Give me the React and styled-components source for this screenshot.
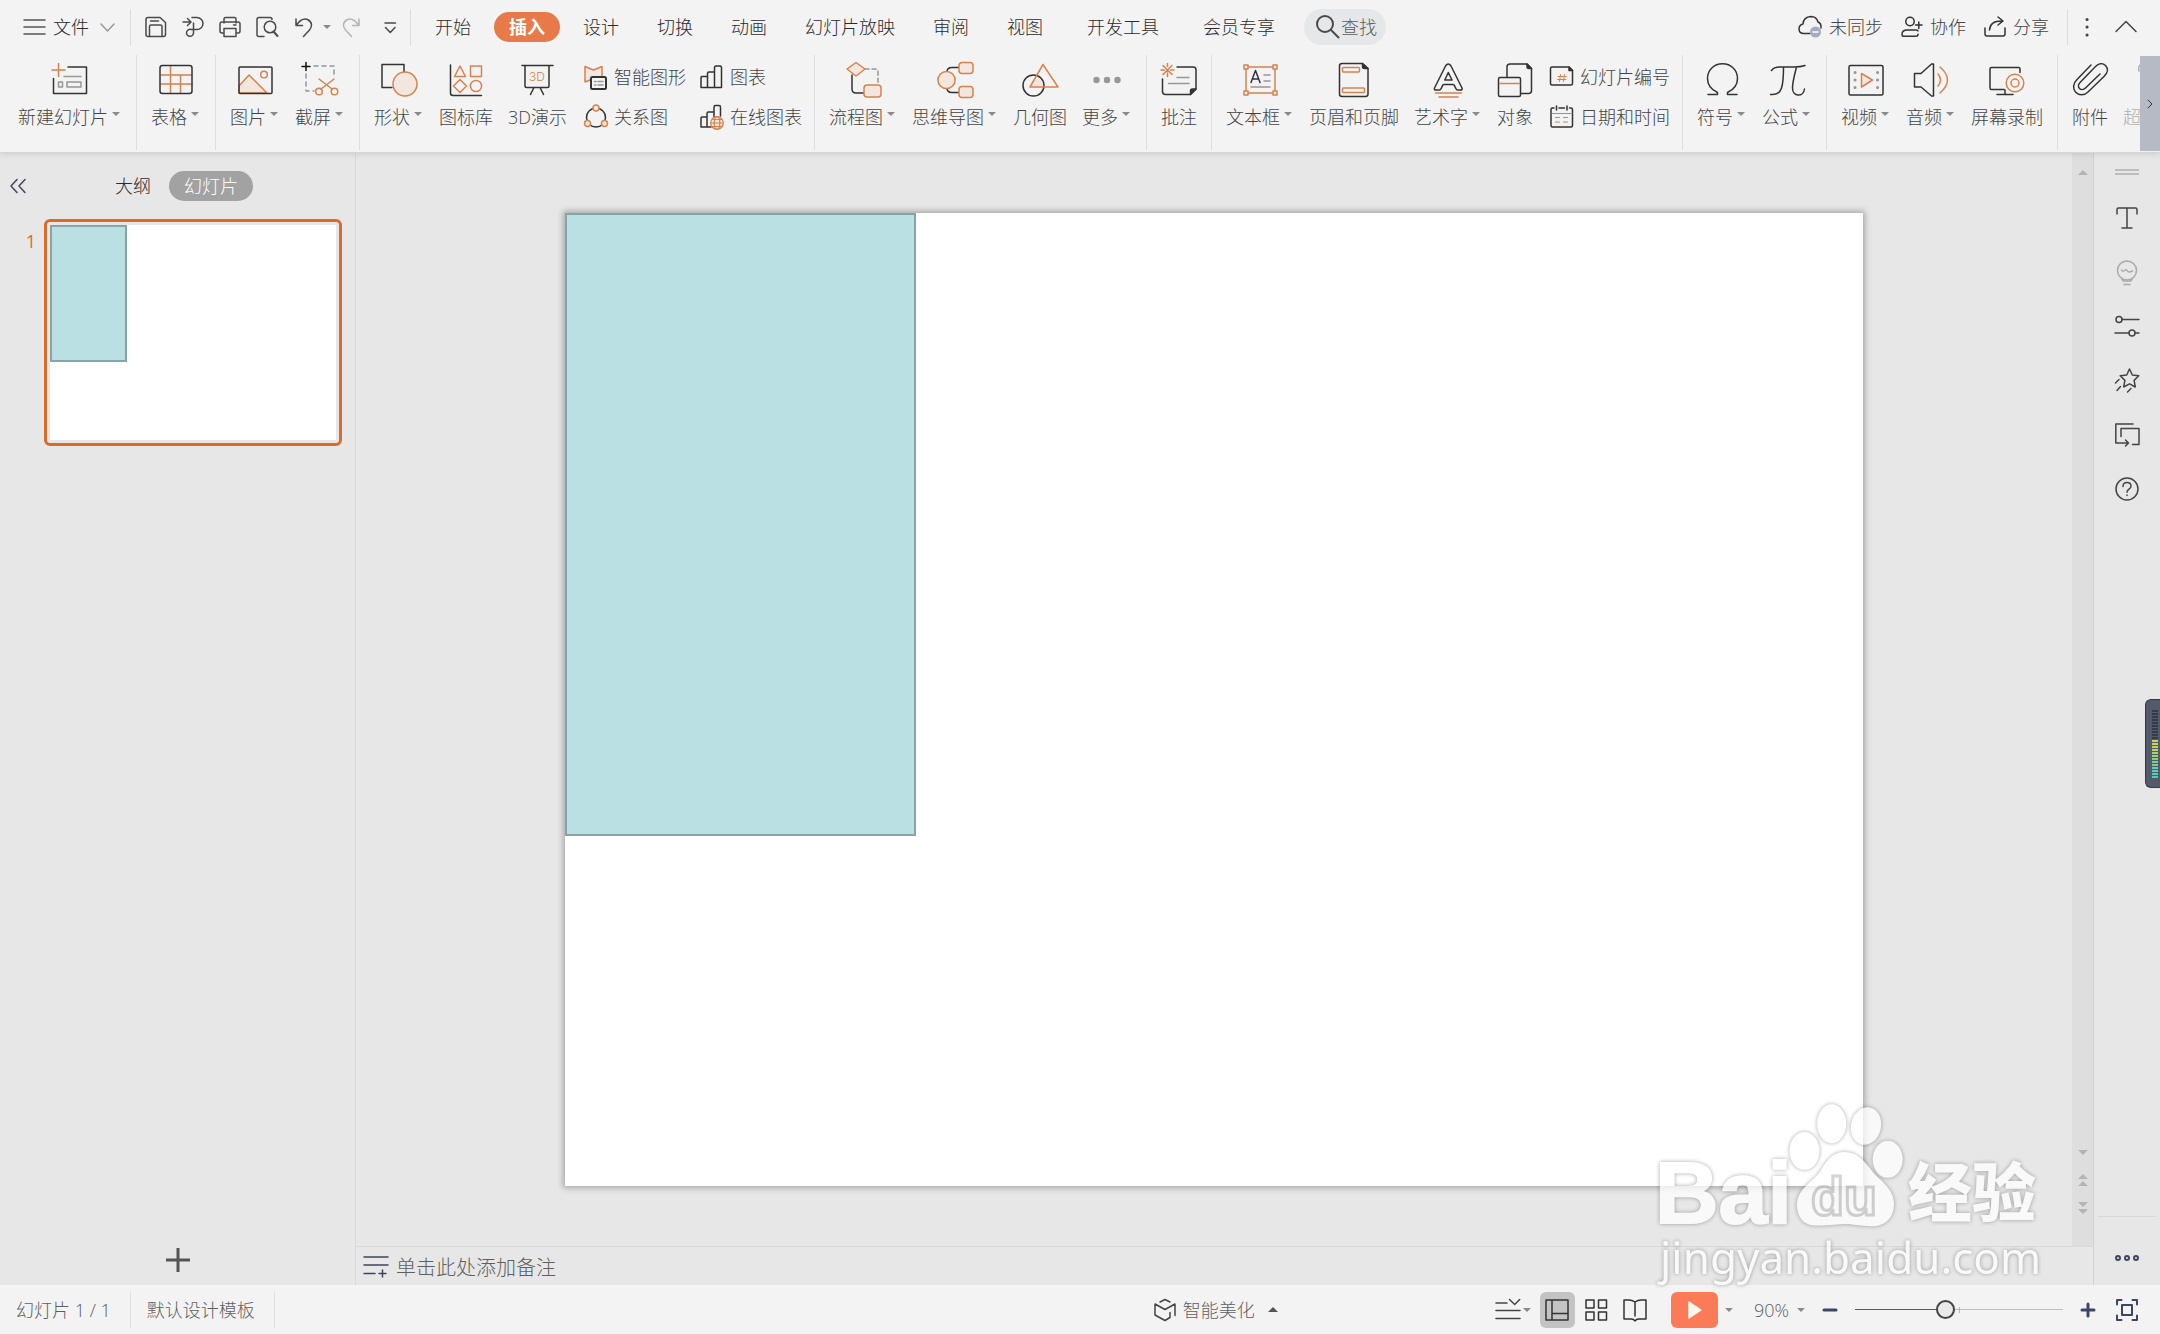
import { useState } from "react";
import styled, { createGlobalStyle, ThemeProvider } from "styled-components";

const theme = {
  bar: "#f3f3f3",
  canvas: "#e7e7e7",
  line: "#d9d9d9",
  text: "#2b2b2b",
  label: "#444444",
  muted: "#5f5f5f",
  accent: "#e87a49",
  select: "#d96b2b",
};

const DARK = "#333333";
const ORANGE = "#d5834f";
const TINT = "#f3e6df";
const GREY = "#979797";
const NAVY = "#3d4663";

const GlobalStyle = createGlobalStyle`
  * {
    box-sizing: border-box;
  }
  body {
    margin: 0;
    font-family: "Open Sans", "Noto Sans CJK SC", sans-serif;
    font-weight: 300;
    font-size: 18px;
    line-height: 26px;
    color: ${theme.text};
    background: ${theme.canvas};
  }
  button, input {
    font: inherit;
    color: inherit;
    margin: 0;
  }
  button {
    display: inline-flex;
    align-items: center;
    justify-content: center;
    border: 0;
    padding: 0;
    background: none;
    white-space: nowrap;
    cursor: pointer;
  }
`;

/* ---------- shell ---------- */
const Shell = styled.div`
  display: grid;
  grid-template-rows: auto minmax(0, 1fr) auto;
  height: 100vh;
  overflow: hidden;
`;

const Header = styled.header`
  background: ${({ theme }) => theme.bar};
  border-bottom: 1px solid #d6d6d6;
  box-shadow: 0 1px 6px rgba(0, 0, 0, 0.12);
  z-index: 1;
  min-width: 0;
`;

const Caret = styled.span`
  flex: none;
  border: 4px solid transparent;
  border-bottom-width: 0;
  border-top-color: #8a8a8a;
  ${({ $up }) =>
    $up && "border-bottom: 5px solid #555; border-top-width: 0; border-left-width: 5px; border-right-width: 5px;"}
`;

const Svg = styled.svg`
  flex: none;
  display: block;
  overflow: visible;
  fill: none;
  stroke: ${({ $tone }) => $tone || DARK};
  stroke-width: 1.5;
  stroke-linecap: round;
  stroke-linejoin: round;
`;

/* ---------- menu bar ---------- */
const MenuBar = styled.div`
  display: flex;
  align-items: center;
  height: 54px;
  padding: 0 16px 0 24px;
`;

const Divider = styled.span`
  flex: none;
  width: 1px;
  height: 36px;
  background: #dddddd;
`;

const FileButton = styled.button`
  gap: 7px;
  height: 36px;
  margin-right: 12px;
`;

const QuickTools = styled.div`
  display: flex;
  align-items: center;
  padding: 0 4px 0 6px;
`;

const QuickButton = styled.button`
  width: ${({ $narrow }) => ($narrow ? "10px" : "37px")};
  height: 36px;
`;

const Tabs = styled.nav`
  display: flex;
  align-items: center;
  gap: 8px;
  padding-left: 9px;
`;

const TabLink = styled.a`
  padding: 2px 15px;
  border-radius: 15px;
  margin-left: ${({ $spaced }) => ($spaced ? "6px" : "0")};
  color: ${({ $active, theme }) => ($active ? "#fff" : theme.text)};
  background: ${({ $active, theme }) => ($active ? theme.accent : "none")};
  font-weight: ${({ $active }) => ($active ? 700 : "inherit")};
  text-decoration: none;
  white-space: nowrap;
`;

const SearchButton = styled.button`
  gap: 1px;
  height: 36px;
  padding: 0 9px 0 12px;
  margin-left: 6px;
  border-radius: 18px;
  background: #e6e7e9;
  color: #5c5c5c;
`;

const Account = styled.div`
  display: flex;
  align-items: center;
  gap: 18px;
  margin-left: auto;
  padding-right: 6px;
  color: ${({ theme }) => theme.label};
  button {
    gap: 7px;
    height: 36px;
  }
`;

const WindowTools = styled.div`
  display: flex;
  align-items: center;
  padding-left: 12px;
  button {
    width: 38px;
    height: 36px;
  }
`;

/* ---------- ribbon ---------- */
const Ribbon = styled.div`
  display: flex;
  height: 98px;
  padding-left: 4px;
`;

const Groups = styled.div`
  display: flex;
  flex: 1;
  min-width: 0;
  overflow: hidden;
`;

const Group = styled.div`
  display: flex;
  flex: none;
  margin: 1px 0 2px;
  padding: 0 6px 0 7px;
  border-right: 1px solid #dfdfdf;
  &:last-child {
    border-right: 0;
    padding-right: 0;
  }
`;

const Tool = styled.button`
  flex-direction: column;
  align-items: ${({ $off }) => ($off ? "flex-start" : "center")};
  justify-content: flex-start;
  gap: 6px;
  flex: none;
  padding: 7px 8px 0 7px;
  color: ${({ $off, theme }) => ($off ? "#b0b0b0" : theme.label)};
`;

const ToolLabel = styled.span`
  display: flex;
  align-items: center;
  gap: 4px;
  padding-right: ${({ $menu }) => ($menu ? "2px" : "0")};
  ${Caret} {
    margin-bottom: 6px;
  }
`;

const ToolGrid = styled.div`
  display: grid;
  grid-template-columns: repeat(${({ $columns }) => $columns}, auto);
  grid-auto-rows: 26px;
  gap: 14px;
  padding: 9px 6px 0 9px;
`;

const SmallTool = styled.button`
  justify-content: flex-start;
  gap: 6px;
  color: ${({ theme }) => theme.label};
`;

const RibbonScroll = styled.button`
  flex: none;
  width: 20px;
  margin: 2px 0 1px;
  background: #b6bac5;
`;

/* ---------- workspace ---------- */
const Workspace = styled.main`
  display: grid;
  grid-template-columns: 356px minmax(0, 1fr) 66px;
  min-height: 0;
`;

const SidePanel = styled.aside`
  display: flex;
  flex-direction: column;
  border-right: 1px solid ${({ theme }) => theme.line};
`;

const PanelHead = styled.div`
  display: flex;
  align-items: center;
  gap: 18px;
  padding: 18px 0 18px 10px;
`;

const CollapseButton = styled.button`
  margin-right: 71px;
`;

const PanelTab = styled.button`
  height: 30px;
  padding: ${({ $active }) => ($active ? "0 15px" : "0")};
  border-radius: 15px;
  color: ${({ $active, theme }) => ($active ? "#fff" : theme.text)};
  background: ${({ $active }) => ($active ? "#a2a2a2" : "none")};
`;

const ThumbRow = styled.div`
  display: grid;
  grid-template-columns: 44px 1fr;
  padding-right: 13px;
`;

const ThumbNumber = styled.span`
  padding: 9px 8px 0 0;
  text-align: right;
  font-weight: 400;
  color: ${({ theme }) => theme.select};
`;

const Thumb = styled.button`
  display: block;
  padding: 3px;
  border: 3px solid ${({ theme }) => theme.select};
  border-radius: 6px;
`;

const Slide = styled.div`
  aspect-ratio: 4 / 3;
  background: #fff;
`;

const Shape = styled.div`
  width: 27%;
  height: 64%;
  background: #bae0e3;
  border: 2px solid #86a5a7;
`;

const AddSlide = styled.button`
  height: 50px;
  margin-top: auto;
`;

const Editor = styled.section`
  display: grid;
  grid-template-rows: minmax(0, 1fr) 39px;
  grid-template-columns: minmax(0, 1fr) 22px;
  min-height: 0;
`;

const Canvas = styled.div`
  display: flex;
  align-items: center;
  justify-content: center;
  min-height: 0;
  > ${Slide} {
    height: calc(100% - 120px);
    box-shadow: 0 0 6px 2px rgba(0, 0, 0, 0.28);
  }
`;

const ScrollRail = styled.div`
  display: flex;
  flex-direction: column;
  align-items: center;
  padding: 6px 0 24px;
  background: #dedede;
  border-right: 1px solid #d2d2d2;
`;

const ScrollButton = styled.button`
  width: 20px;
  height: 28px;
  &:nth-child(2) {
    margin-top: auto;
  }
`;

const Notes = styled.label`
  grid-column: 1 / -1;
  display: flex;
  align-items: center;
  gap: 8px;
  padding: 2px 0 0 8px;
  border-top: 1px solid ${({ theme }) => theme.line};
  border-right: 1px solid #d2d2d2;
`;

const NotesInput = styled.input`
  flex: 1;
  min-width: 0;
  height: 30px;
  padding: 0;
  border: 0;
  outline: 0;
  background: none;
  font-size: 20px;
  &::placeholder {
    color: ${({ theme }) => theme.muted};
    opacity: 1;
  }
`;

const Rail = styled.aside`
  display: flex;
  flex-direction: column;
  align-items: center;
`;

const RailGrip = styled.span`
  width: 24px;
  height: 6px;
  margin: 16px 0;
  border: solid #bdbdbd;
  border-width: 2px 0;
`;

const RailButton = styled.button`
  width: 58px;
  height: 54px;
`;

const RailFooter = styled.div`
  margin-top: auto;
  padding-top: 14px;
  border-top: 1px solid ${({ theme }) => theme.line};
`;

/* ---------- status bar ---------- */
const StatusBar = styled.footer`
  display: grid;
  grid-template-columns: 17fr auto 13fr;
  align-items: center;
  height: 49px;
  background: ${({ theme }) => theme.bar};
  color: ${({ theme }) => theme.muted};
`;

const StatusSide = styled.div`
  display: flex;
  align-items: center;
  justify-content: ${({ $end }) => ($end ? "flex-end" : "flex-start")};
  padding-right: ${({ $end }) => ($end ? "22px" : "0")};
`;

const StatusCell = styled.span`
  display: flex;
  align-items: center;
  height: 36px;
  padding: 0 19px 0 16px;
  border-right: 1px solid #dfdfdf;
`;

const BeautifyButton = styled.button`
  gap: 7px;
  ${Caret} {
    margin-left: 6px;
  }
`;

const ViewButton = styled.button`
  gap: 3px;
  width: ${({ $wide }) => ($wide ? "44px" : "35px")};
  height: 36px;
  margin: 0 2px;
  border-radius: 6px;
  background: ${({ $active }) => ($active ? "#c3c3c3" : "none")};
`;

const PlayButton = styled.button`
  width: 47px;
  height: 36px;
  margin-left: 16px;
  border-radius: 6px;
  background: #fb7a57;
`;

const MenuButton = styled.button`
  gap: 8px;
  height: 36px;
  padding-left: 7px;
`;

const ZoomValue = styled(MenuButton)`
  padding-left: 21px;
`;

const ZoomStep = styled.button`
  width: 50px;
  height: 36px;
`;

const ZoomSlider = styled.input`
  appearance: none;
  width: 208px;
  height: 18px;
  background:
    linear-gradient(#5a5a5a, #5a5a5a) 0 50% / 43% 1px no-repeat,
    linear-gradient(#b5b5b5, #b5b5b5) 50% 50% / 1px 6px no-repeat,
    linear-gradient(#bcbcbc, #bcbcbc) 0 50% / 100% 1px no-repeat;
  &::-webkit-slider-thumb {
    appearance: none;
    width: 19px;
    height: 19px;
    border: 2px solid #444;
    border-radius: 50%;
    background: #e9e9e9;
  }
`;

/* ---------- overlays ---------- */
const LevelMeter = styled.div`
  position: fixed;
  right: 0;
  top: 699px;
  z-index: 3;
  display: flex;
  flex-direction: column;
  gap: 1px;
  width: 15px;
  padding: 10px 2px 9px 6px;
  border: 1px solid #343a45;
  border-right: 0;
  border-radius: 6px 0 0 6px;
  background: #535b6b;
`;

const Level = styled.span`
  height: 2px;
  background: ${({ $color }) => $color};
`;

const Watermark = styled.svg`
  position: fixed;
  right: 110px;
  bottom: 44px;
  z-index: 2;
  opacity: 0.74;
  pointer-events: none;
  overflow: visible;
  fill: #fff;
  filter: drop-shadow(0 0 2px rgba(0, 0, 0, 0.45));
`;

/* ---------- icon artwork ---------- */
const big = {
  newSlide: (
    <>
      <path d="M16 5h18.500v26.500h-33v-15" />
      <path stroke={ORANGE} d="M0 8h13M6.500 1.500v13" />
      <path stroke={GREY} d="M12 14.500h17M6.500 20h4v5h-4zM15 20h14v5h-14z" />
    </>
  ),
  table: (
    <>
      <path stroke={ORANGE} d="M12.500 4v27M22.500 13v18M3 13h31M3 22h31" />
      <rect x="2" y="3.500" width="32" height="28" rx="2.500" />
    </>
  ),
  picture: (
    <>
      <path stroke={ORANGE} fill={TINT} d="M2 24l10-11 18 18H2z" />
      <circle stroke={ORANGE} cx="27" cy="12.500" r="3.300" />
      <rect x="2" y="5" width="33" height="26.500" rx="1" />
    </>
  ),
  capture: (
    <>
      <path stroke={GREY} strokeDasharray="4 4" d="M12 4h20v9M4 12v17h8" />
      <path stroke="#111" d="M0 4.500h8M4 .5v8" />
      <path stroke={ORANGE} d="M32 17L19 27M17 17l13 10" />
      <circle stroke={ORANGE} cx="17" cy="29.500" r="3.300" />
      <circle stroke={ORANGE} cx="32.500" cy="29.500" r="3.300" />
    </>
  ),
  shapes: (
    <>
      <path d="M11 25.500H1V2.500h22v8" />
      <circle stroke={ORANGE} fill={TINT} cx="24" cy="22" r="12" />
    </>
  ),
  library: (
    <>
      <path d="M2.500 3v28q0 2.500 2.500 2.500h28.500" />
      <path stroke={ORANGE} d="M12 4l5.500 10.500h-11zM22.500 4h11v10.500h-11zM12 17.500l6.500 6.500-6.500 6.500-6.500-6.500z" />
      <circle stroke={ORANGE} cx="28" cy="24" r="5.600" />
    </>
  ),
  board3d: (
    <>
      <path d="M3 3.500h31M6 3.500v20.500q0 1.500 1.500 1.500h21q1.500 0 1.500-1.500V3.500M15 25.500l-3.500 7M21 25.500l3.500 7" />
      <text x="18" y="19" textAnchor="middle" fontSize="12" fill={ORANGE} stroke="none" fontFamily="Inter">
        3D
      </text>
    </>
  ),
  flow: (
    <>
      <path stroke={GREY} strokeDasharray="4 3" d="M20 7h10q3 0 3 3v13" />
      <path d="M7 13v14q0 4 4 4h8" />
      <path stroke={ORANGE} fill={TINT} d="M11 .500l9 6.500-9 7-9-7z" />
      <rect stroke={ORANGE} fill={TINT} x="19" y="23" width="17" height="12" rx="3" />
    </>
  ),
  mind: (
    <>
      <path d="M10 10q0-4.500 5-4.500h7M10 26q0 4.500 5 4.500h7" />
      <circle stroke={ORANGE} fill={TINT} cx="9.500" cy="18" r="8.600" />
      <rect stroke={ORANGE} fill={TINT} x="22" y=".5" width="14" height="11" rx="3" />
      <rect stroke={ORANGE} fill={TINT} x="22" y="24.500" width="14" height="11" rx="3" />
    </>
  ),
  geometry: (
    <>
      <path stroke="none" fill={TINT} d="M16.500 14.500q5 3 5 10H8z" />
      <circle cx="11.500" cy="23.500" r="10.500" />
      <path stroke={ORANGE} d="M21 2.500l15 22.500H8z" />
    </>
  ),
  more: (
    <g fill="#979797" stroke="none">
      <circle cx="7.500" cy="18" r="3.200" />
      <circle cx="18" cy="18" r="3.200" />
      <circle cx="28.500" cy="18" r="3.200" />
    </g>
  ),
  comment: (
    <>
      <path d="M16 5h16q3 0 3 3v19l-5.500 5.500h-25q-3 0-3-3V17" />
      <path fill={DARK} d="M35 27h-3.500q-2 0-2 2v3.500z" />
      <path stroke={ORANGE} d="M6.500 1.500v3M6.500 11v3.500M0 8h3.500M9.500 8h3.500M2 3.500l9 9M11 3.500l-9 9" />
      <path stroke={GREY} d="M16 15.500h12M7.500 21.500H28" />
    </>
  ),
  textBox: (
    <>
      <rect stroke={ORANGE} x="4" y="5" width="29" height="26" />
      {[[4, 5], [33, 5], [4, 31], [33, 31]].map(([x, y]) => (
        <rect key={`${x}-${y}`} stroke={ORANGE} fill="#f3f3f3" x={x - 2} y={y - 2} width="4" height="4" />
      ))}
      <path d="M9 20.500l4.500-12 4.500 12M10.500 17h6" />
      <path stroke={GREY} d="M22 13h6M22 19h6M9 25h19" />
    </>
  ),
  headerFooter: (
    <>
      <path d="M26.500 1.500H6q-2.500 0-2.500 2.500v28q0 2.500 2.500 2.500h23.500q2.500 0 2.500-2.500V6.500z" />
      <path fill={DARK} d="M26.500 1.500v3q0 2 2 2H32z" />
      <rect stroke={ORANGE} x="6.500" y="5.500" width="17" height="4.500" rx="1" />
      <rect stroke={ORANGE} x="6.500" y="26" width="22" height="4.500" rx="1" />
    </>
  ),
  wordArt: (
    <>
      <path d="M15.500 4L4.500 26q-.6 2 1.300 2h3.500q1.200 0 1.700-1.200l1.800-3.600q.4-.8 1.400-.8h8.600q1 0 1.400.8l1.800 3.600Q26.500 28 27.700 28h3q2 0 1.300-2L21 4q-2.700-4-5.500 0zM18.300 10.500l3.700 7.500h-7.200z" />
      <path stroke={ORANGE} d="M5.500 31h26M9 35h19" />
    </>
  ),
  object: (
    <>
      <path d="M10 15V5q0-3 3-3h17l4.500 4.500v22q0 3-3 3H24" />
      <path fill={DARK} d="M30 2v2.500q0 2 2 2h2.500z" />
      <rect x="1.500" y="15.500" width="22" height="19" rx="1.500" />
      <path stroke={ORANGE} d="M2.500 21.500h20" />
    </>
  ),
  omega: (
    <path d="M4 32.500h9.500v-2C7 27.500 3.500 22.500 3.500 16.500 3.500 8 10 1.800 18.500 1.800S33.500 8 33.500 16.500c0 6-3.500 11-10 14v2H33" />
  ),
  pi: (
    <path d="M2.500 8.500C4 6 7 5 11 5h14c5 0 8-.5 11-1.500M14.500 5c0 8 0 15-2 21-1.500 5-5.500 7-11 6.500M27.500 5c-2 8-4 15-4 21 0 9 11 9.500 12 1" />
  ),
  video: (
    <>
      <rect x="1" y="3.500" width="34" height="29.500" rx="1.500" />
      <path stroke={GREY} strokeWidth="3" d="M7 10.500h.1M7 18h.1M7 25.500h.1M29.500 10.500h.1M29.500 18h.1M29.500 25.500h.1" />
      <path stroke={ORANGE} fill={TINT} d="M13.500 11.500l11 6.500-11 7z" />
    </>
  ),
  audio: (
    <>
      <path d="M1.500 11.500H8L18.500 2h2v32h-2L8 25H1.500z" />
      <path stroke={ORANGE} d="M25 12q5 6 0 12M27 5q15 13 0 26" />
    </>
  ),
  record: (
    <>
      <path d="M31 10.500V7q0-1.500-1.500-1.500H2.500Q1 5.500 1 7v19q0 1.500 1.500 1.500H15M16 28v4.500M8 32.500h16" />
      <circle stroke={ORANGE} cx="26" cy="21" r="8.800" />
      <circle stroke={ORANGE} cx="26" cy="21" r="4" />
    </>
  ),
  clip: (
    <path d="M19 3L5 17.500c-4 4-4.500 9-1.500 12.500 3.500 4 9 3.500 12.500 0l16-15.500c4-4 4.500-8 1.500-11s-7-2-10 1L8.500 20c-2.500 2.500-2.500 5-1 6.500s4 1.500 6-.5L28 12" />
  ),
  link: <path stroke="#b0b0b0" d="M17 3q-2 2-1 6" />,
};

const small = {
  smart: (
    <>
      <path stroke={ORANGE} fill={TINT} d="M6 15l-5 2V1.500L9.500 5 18 1.500V11" />
      <rect x="7" y="12" width="15" height="12" rx="1.500" fill="#f3f3f3" strokeWidth="2" />
      <path stroke={GREY} strokeDasharray="1.500 2 5 9" d="M10.500 16.500h9M10.500 20h9" />
    </>
  ),
  chart: <path d="M1 22.500v-10q0-1 1-1h5.500v11zM7.500 22.500v-14q0-1.500 1.500-1.500h5.500M14.500 22.500V2.500q0-1.500 1.500-1.500h4q1.500 0 1.500 1.500v20H1" />,
  relation: (
    <>
      <circle cx="12" cy="12.500" r="9.500" />
      <circle stroke={ORANGE} fill={TINT} cx="12" cy="3" r="3" />
      <circle stroke={ORANGE} fill={TINT} cx="3.500" cy="18.500" r="3" />
      <circle stroke={ORANGE} fill={TINT} cx="20.500" cy="18.500" r="3" />
    </>
  ),
  onlineChart: (
    <>
      <path d="M11 22H1v-9q0-1 1-1h5v10M7 12V8.500Q7 7 8.500 7H14M14 12V2q0-1.500 1.500-1.500H19q1.500 0 1.500 1.500v9" />
      <g stroke={ORANGE} strokeWidth="1.200">
        <circle cx="17" cy="18" r="6.300" fill={TINT} />
        <ellipse cx="17" cy="18" rx="2.800" ry="6.300" />
        <path d="M11 18h12M12 14.500h10M12 21.500h10" />
      </g>
    </>
  ),
  slideNo: (
    <>
      <path d="M19 2H2Q.5 2 .5 3.500v15Q.5 20 2 20h19q1.500 0 1.500-1.500v-13z" />
      <path fill={DARK} d="M19 2v3.500h3.500z" />
      <path stroke={ORANGE} strokeWidth="1" d="M10.500 9.500l-1 7M14.500 9.500l-1 7M8 11.500h8.500M7.500 14.500h8.500" />
    </>
  ),
  date: (
    <>
      <path d="M4 3H2.500Q1 3 1 4.500v16Q1 22 2.500 22h18.500q1.500 0 1.500-1.500v-16Q22.500 3 21 3h-1.500M9 3h5.500M6.500 1v4M17 1v4" />
      <path stroke={ORANGE} strokeWidth="1.200" d="M2 8.500h20M5.500 12.500h4M13.500 12.500h4M5.500 17h4M13.500 17h4" />
    </>
  ),
};

const quick = {
  save: <path d="M3 1.500h12l5.500 5v12q0 2-2 2H3q-2 0-2-2v-15q0-2 2-2zM4.500 20V10.500q0-1.500 1.500-1.500h9.500q1.500 0 1.500 1.500V20M5.500 5h8" />,
  exportPdf: <path d="M1 6h7M5.500 2.500L9 6 5.500 9.500M10 1.500h5a6 6 0 010 12h-6a3.500 3.500 0 102.500 3.500V7" />,
  print: <path d="M5 7V3q0-1.500 1.500-1.500h9Q17 1.500 17 3v4M5 17H3q-2 0-2-2V8q0-2 2-2h16q2 0 2 2v7q0 2-2 2h-2M5 12.500h12v8H5zM14.500 9h2.500" />,
  preview: (
    <>
      <path d="M8 20.500H3q-2 0-2-2v-15q0-2 2-2h11q2 0 2 2" />
      <circle cx="14" cy="11" r="5.800" />
      <path strokeWidth="2" d="M17.500 15.500l4 4.500" />
    </>
  ),
  undo: <path d="M3 3v6.500h6.500M3.500 9C7 4 11 2 14.500 3.500c5 2.500 5 7 2 10.500l-6 6.500" />,
  redo: <path stroke="#b5b5b5" d="M19 3v6.500h-6.500M18.500 9C15 4 11 2 7.500 3.500c-5 2.500-5 7-2 10.500l6 6.500" />,
  custom: <path d="M8 7h10.500M8.500 11.500l4.800 5 4.700-5" />,
};

const rail = {
  文本: <path d="M2 8V3.500Q2 2 3.500 2h17Q22 2 22 3.500V8M12 2v20M7 22h10" />,
  灵感: (
    <g stroke="#a9a9a9">
      <circle cx="12" cy="10.500" r="9.500" />
      <path d="M6.500 10q1 2 3 .5t3 .5 5 0M6.500 18l1.500 3h8l1.500-3M9 24.500h6" />
    </g>
  ),
  属性: (
    <>
      <path d="M7 5.500h17M0 19h14M20 19h4" />
      <circle cx="4" cy="5.500" r="3" />
      <circle cx="17" cy="19" r="3" />
    </>
  ),
  动画: <path d="M14.500 1l2.800 6 6.500.800-4.700 4.600 1.200 6.600-5.800-3.200-5.800 3.200 1.200-6.600L5.200 7.800l6.500-.8zM4 11.500l-3.500 3.500M5.500 18.500L2 22.500M16 20.500l-3.500 3.500" />,
  切换: <path d="M18 2H.800v19H13M10.500 18l3 3-3 3M6 14.500V6.500h18v16h-6.500" />,
  帮助: (
    <>
      <circle cx="12" cy="13" r="11" />
      <path d="M8 10.500c0-2.500 1.800-4 4-4s4 1.500 4 3.700c0 3-4 3-4 6M12 19v.500" />
    </>
  ),
};

/* ---------- data ---------- */
const tabs = ["开始", "插入", "设计", "切换", "动画", "幻灯片放映", "审阅", "视图", "开发工具", "会员专享"];

const groups = [
  { tools: [["新建幻灯片", "newSlide", true]] },
  { tools: [["表格", "table", true]] },
  { tools: [["图片", "picture", true], ["截屏", "capture", true]] },
  {
    tools: [["形状", "shapes", true], ["图标库", "library"], ["3D演示", "board3d"]],
    grid: [["智能图形", "smart"], ["图表", "chart"], ["关系图", "relation"], ["在线图表", "onlineChart"]],
    columns: 2,
  },
  { tools: [["流程图", "flow", true], ["思维导图", "mind", true], ["几何图", "geometry"], ["更多", "more", true]] },
  { tools: [["批注", "comment"]] },
  {
    tools: [["文本框", "textBox", true], ["页眉和页脚", "headerFooter"], ["艺术字", "wordArt", true], ["对象", "object"]],
    grid: [["幻灯片编号", "slideNo"], ["日期和时间", "date"]],
    columns: 1,
  },
  { tools: [["符号", "omega", true], ["公式", "pi", true]] },
  { tools: [["视频", "video", true], ["音频", "audio", true], ["屏幕录制", "record"]] },
  { tools: [["附件", "clip"], ["超", "link"]] },
];

const levels = [
  ...Array(10).fill("#353b4a"),
  "#d3d34e", "#cdd45c", "#c3d35c", "#b8d462", "#a9d268", "#99d070",
  "#8bce7c", "#7fcf8c", "#72cf9c", "#66cfaa", "#5cd0b4", "#50d2b8", "#3fd4b4",
];

const Icon = ({ size, width = size, tone, children }) => (
  <Svg width={width} height={size} viewBox={`0 0 ${width} ${size}`} $tone={tone} aria-hidden="true">
    {children}
  </Svg>
);

const RibbonTool = ({ label, icon, menu }) => (
  <Tool $off={icon === "link"}>
    <Icon size={36} width={icon === "link" ? 18 : 36}>{big[icon]}</Icon>
    <ToolLabel $menu={menu}>
      {label}
      {menu && <Caret />}
    </ToolLabel>
  </Tool>
);

const TopMenu = ({ active, onSelect }) => (
  <MenuBar>
    <FileButton>
      <Icon size={22} tone="#555">
        <path d="M0 4h21M0 11h21M0 18h21" />
      </Icon>
      文件
      <Icon size={22} tone="#999">
        <path d="M5 8l6.500 7L18 8" />
      </Icon>
    </FileButton>
    <Divider />
    <QuickTools>
      {["save", "exportPdf", "print", "preview", "undo"].map((name) => (
        <QuickButton key={name} aria-label={name}>
          <Icon size={22} tone="#4a4a4a">{quick[name]}</Icon>
        </QuickButton>
      ))}
      <QuickButton $narrow aria-label="undo list">
        <Caret />
      </QuickButton>
      {["redo", "custom"].map((name) => (
        <QuickButton key={name} aria-label={name}>
          <Icon size={22} tone="#4a4a4a">{quick[name]}</Icon>
        </QuickButton>
      ))}
    </QuickTools>
    <Divider />
    <Tabs>
      {tabs.map((tab) => (
        <TabLink
          key={tab}
          href="#"
          $active={tab === active}
          $spaced={tab === "开发工具" || tab === "会员专享"}
          onClick={() => onSelect(tab)}
        >
          {tab}
        </TabLink>
      ))}
      <SearchButton>
        <Icon size={24} tone="#4a4a4a">
          <circle cx="9" cy="9" r="8" strokeWidth="2" />
          <path strokeWidth="2" d="M15 15l7.500 7.500" />
        </Icon>
        查找
      </SearchButton>
    </Tabs>
    <Account>
      <button>
        <Icon size={24}>
          <path d="M12 18.500H6q-5 0-5-4.500 0-4 4-5 .5-7 8-7.500 5.500 0 7 5.500 3.500 1.500 3 6" />
          <circle cx="17.500" cy="17" r="5.500" fill="#a3abbd" stroke="none" />
          <path stroke="#fff" d="M15 17h5" />
        </Icon>
        未同步
      </button>
      <button>
        <Icon size={22}>
          <circle cx="9" cy="5.500" r="4.200" />
          <path d="M17 15q0-1-2-1H6q-5 0-5 4.500 0 1.800 2 1.800h12q2 0 2-2M14.500 9h6.500M17.800 6v6.500" />
        </Icon>
        协作
      </button>
      <button>
        <Icon size={22}>
          <path d="M1 12v6q0 2 2 2h16q2 0 2-2v-6M5.500 14Q6 5 17.500 5M14 1l5 4-5 4" />
        </Icon>
        分享
      </button>
    </Account>
    <WindowTools>
      <Divider />
      <button aria-label="更多选项">
        <Icon size={22} tone="#444">
          <path strokeWidth="3" d="M11 3.500h.1M11 11h.1M11 19h.1" />
        </Icon>
      </button>
      <button aria-label="收起功能区">
        <Icon size={22} tone="#444">
          <path d="M2 15.500L12 5.500l10 10" />
        </Icon>
      </button>
    </WindowTools>
  </MenuBar>
);

const InsertRibbon = () => (
  <Ribbon>
    <Groups>
      {groups.map(({ tools, grid, columns }) => (
        <Group key={tools[0][0]}>
          {tools.map(([label, icon, menu]) => (
            <RibbonTool key={label} label={label} icon={icon} menu={menu} />
          ))}
          {grid && (
            <ToolGrid $columns={columns}>
              {grid.map(([label, icon]) => (
                <SmallTool key={label}>
                  <Icon size={24}>{small[icon]}</Icon>
                  {label}
                </SmallTool>
              ))}
            </ToolGrid>
          )}
        </Group>
      ))}
    </Groups>
    <RibbonScroll aria-label="向右滚动">
      <Icon size={10}>
        <path strokeWidth="1" d="M3 1l4 4-4 4" />
      </Icon>
    </RibbonScroll>
  </Ribbon>
);

const SlidePanel = () => (
  <SidePanel>
    <PanelHead>
      <CollapseButton aria-label="折叠">
        <Icon size={16} tone={NAVY}>
          <path d="M7 1.500L1 8l6 6.500M15 1.500L9 8l6 6.500" />
        </Icon>
      </CollapseButton>
      <PanelTab>大纲</PanelTab>
      <PanelTab $active>幻灯片</PanelTab>
    </PanelHead>
    <ThumbRow>
      <ThumbNumber>1</ThumbNumber>
      <Thumb aria-label="1">
        <Slide>
          <Shape />
        </Slide>
      </Thumb>
    </ThumbRow>
    <AddSlide aria-label="新建">
      <Icon size={24} tone="#555">
        <path strokeWidth="3" strokeLinecap="butt" d="M0 12h24M12 0v24" />
      </Icon>
    </AddSlide>
  </SidePanel>
);

const SlideEditor = () => (
  <Editor>
    <Canvas>
      <Slide>
        <Shape />
      </Slide>
    </Canvas>
    <ScrollRail>
      {["M5 8h10l-5-5z", "M5 4h10l-5 5z", "M5 5h10l-5-5zM5 12h10l-5-5z", "M5 0h10l-5 5zM5 7h10l-5 5z"].map((d) => (
        <ScrollButton key={d} aria-label="滚动">
          <Svg width="20" height="12" viewBox="0 0 20 12">
            <path d={d} fill="#b4b4b4" stroke="none" />
          </Svg>
        </ScrollButton>
      ))}
    </ScrollRail>
    <Notes>
      <Icon size={24} tone={NAVY}>
        <path d="M0 2h24M0 10h24M0 18.500h11M15 18.500h7M18.500 15v7" />
      </Icon>
      <NotesInput placeholder="单击此处添加备注" />
    </Notes>
  </Editor>
);

const Status = () => {
  const [zoom, setZoom] = useState(90);

  return (
    <StatusBar>
      <StatusSide>
        <StatusCell>幻灯片 1 / 1</StatusCell>
        <StatusCell>默认设计模板</StatusCell>
      </StatusSide>
      <BeautifyButton>
        <Icon size={22} tone="#444">
          <path d="M6 3l5-2.500L16 3M1 5v11l10 5.500 5-3v-5M1 5l10 5.500L21 5v11.500" />
        </Icon>
        智能美化
        <Caret $up />
      </BeautifyButton>
      <StatusSide $end>
        <ViewButton $wide aria-label="显示选项">
          <Icon size={24} tone="#444">
            <path d="M0 5h11M0 12.500h24M0 20.500h24M13.500 1.500l5.200 5 5-5" />
          </Icon>
          <Caret />
        </ViewButton>
        <ViewButton $active aria-label="普通视图">
          <Icon size={24}>
            <path d="M1 2h22v20H1zM7 2v20M7 15.500h16" />
          </Icon>
        </ViewButton>
        <ViewButton aria-label="浏览视图">
          <Icon size={22}>
            <path d="M1 1h8v8H1zM13.500 1h8v8h-8zM1 13h8v8H1zM13.500 13h8v8h-8z" />
          </Icon>
        </ViewButton>
        <ViewButton aria-label="阅读视图">
          <Icon size={24}>
            <path d="M12 4q-3-2-6-2H1v19h7q3 0 4 2 1-2 4-2h7V2h-5q-3 0-6 2zM12 4v14" />
          </Icon>
        </ViewButton>
        <PlayButton aria-label="播放">
          <Icon size={18}>
            <path fill="#fff6ee" stroke="#fff6ee" d="M4 1l12 8-12 8z" />
          </Icon>
        </PlayButton>
        <MenuButton aria-label="播放选项">
          <Caret />
        </MenuButton>
        <ZoomValue>
          {zoom}%
          <Caret />
        </ZoomValue>
        <ZoomStep aria-label="缩小">
          <Icon size={16} tone={NAVY}>
            <path strokeWidth="3" d="M2 8h12" />
          </Icon>
        </ZoomStep>
        <ZoomSlider
          type="range"
          min="10"
          max="196"
          value={zoom}
          aria-label="缩放"
          onChange={(e) => setZoom(Number(e.target.value))}
        />
        <ZoomStep aria-label="放大">
          <Icon size={16} tone={NAVY}>
            <path strokeWidth="3" d="M2 8h12M8 2v12" />
          </Icon>
        </ZoomStep>
        <button aria-label="最佳显示比例">
          <Icon size={22} width={25} tone={NAVY}>
            <path strokeWidth="2" d="M4 5.500V1h4.500M19.500 1H24v4.500M24 16.500V21h-4.500M8.500 21H4v-4.500M9 6h10v10H9z" />
          </Icon>
        </button>
      </StatusSide>
    </StatusBar>
  );
};

const App = () => {
  const [tab, setTab] = useState("插入");

  return (
    <ThemeProvider theme={theme}>
      <GlobalStyle />
      <Shell>
        <Header>
          <TopMenu active={tab} onSelect={setTab} />
          <InsertRibbon />
        </Header>
        <Workspace>
          <SlidePanel />
          <SlideEditor />
          <Rail>
            <RailGrip />
            {Object.entries(rail).map(([name, art]) => (
              <RailButton key={name} aria-label={name}>
                <Icon size={24} tone="#444">{art}</Icon>
              </RailButton>
            ))}
            <RailFooter>
              <RailButton aria-label="更多">
                <Icon size={24} tone={NAVY}>
                  <g strokeWidth="2">
                    <circle cx="3" cy="12" r="2" />
                    <circle cx="12" cy="12" r="2" />
                    <circle cx="21" cy="12" r="2" />
                  </g>
                </Icon>
              </RailButton>
            </RailFooter>
          </Rail>
        </Workspace>
        <Status />
      </Shell>

      <LevelMeter>
        {levels.map((color, index) => (
          <Level key={index} $color={color} />
        ))}
      </LevelMeter>

      <Watermark width="400" height="200" viewBox="0 0 400 200">
        <text x="5" y="133" fontSize="88" fontWeight="700" fontFamily="Liberation Sans" stroke="#fff" strokeWidth="2">
          Bai
        </text>
        <ellipse cx="154.500" cy="61" rx="15" ry="19" />
        <ellipse cx="181.700" cy="33.700" rx="14.500" ry="19.500" />
        <ellipse cx="216" cy="36" rx="15" ry="19" transform="rotate(12 216 36)" />
        <ellipse cx="237.700" cy="69.300" rx="15" ry="18.500" />
        <path d="M195 62C208 62 215 72 222 81C230 91 244 98 244 114C244 130 232 138 218 136C205 135 200 134 195 134C190 134 175 136 165 135.500C152 135 147 125 147 115C147 98 164 92 171 80C177 70 183 62 195 62Z" />
        <text
          x="161"
          y="125"
          fontSize="54"
          fontWeight="700"
          fontFamily="Liberation Sans"
          stroke="#c4c4c4"
          strokeWidth="3"
        >
          du
        </text>
        <text x="258" y="126" fontSize="64" fontWeight="900" fontFamily="Noto Sans CJK SC">
          经验
        </text>
        <text x="10" y="184" fontSize="44" fontWeight="400" fontFamily="Noto Sans">
          jingyan.baidu.com
        </text>
      </Watermark>
    </ThemeProvider>
  );
};

export default App;
